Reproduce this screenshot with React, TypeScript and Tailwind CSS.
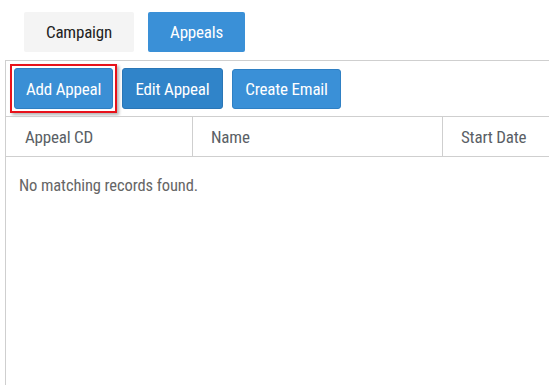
import React from "react";

export default function App() {
  return (
    <div className="w-[549px] h-[385px] bg-white overflow-hidden flex flex-col font-['Roboto_Condensed','Roboto',sans-serif]">
      <div className="flex gap-[14px] pl-[24px] pt-[12px]">
        <div className="w-[110px] h-[40px] pt-[2px] rounded-[2px] bg-[#f4f4f4] text-[#222] text-[17px] tracking-[-0.2px] flex items-center justify-center">
          Campaign
        </div>
        <div className="w-[97px] h-[40px] pt-[2px] rounded-[2px] bg-[#3a90d7] text-white text-[17px] tracking-[-0.2px] flex items-center justify-center">
          Appeals
        </div>
      </div>
      <div className="ml-[5px] mt-[8px] flex-1 border-l border-t border-[#cfcfcf] flex flex-col w-[600px]">
        <div className="flex items-center pl-[4px] pt-[3px] pb-[3px]">
          <div className="border-2 border-[#e8121b] p-[2px] shadow-[2px_2px_3px_rgba(0,0,0,0.3)]">
            <button className="w-[99px] h-[41px] pt-[2px] rounded-[3px] bg-[#3a8fd5] border border-[#2f7fc2] text-white text-[17px] tracking-[-0.2px] flex items-center justify-center">
              Add Appeal
            </button>
          </div>
          <button className="ml-[5px] w-[101px] h-[41px] pt-[2px] rounded-[3px] bg-[#3084c9] border border-[#2a76b6] text-white text-[17px] tracking-[-0.2px] flex items-center justify-center">
            Edit Appeal
          </button>
          <button className="ml-[9px] w-[109px] h-[40px] pt-[2px] rounded-[3px] bg-[#3a90d7] border border-[#2f80c4] text-white text-[17px] tracking-[-0.2px] flex items-center justify-center">
            Create Email
          </button>
        </div>
        <div className="flex h-[41px] border-t border-b border-[#cfcfcf] text-[17px] tracking-[-0.2px] text-[#5a5f66]">
          <div className="w-[187px] pt-[2px] border-r border-[#cfcfcf] flex items-center pl-[19px]">Appeal CD</div>
          <div className="w-[250px] pt-[2px] border-r border-[#cfcfcf] flex items-center pl-[18px]">Name</div>
          <div className="flex-1 pt-[2px] flex items-center pl-[18px]">Start Date</div>
        </div>
        <div className="pl-[13px] pt-[17px] text-[16.5px] tracking-[-0.1px] text-[#666]">No matching records found.</div>
      </div>
    </div>
  );
}
